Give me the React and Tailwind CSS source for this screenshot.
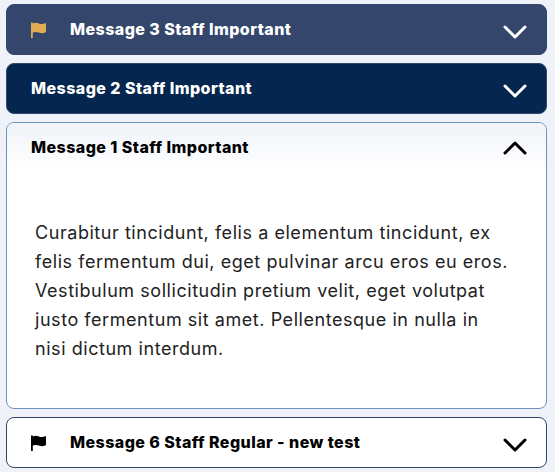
const Flag = ({ className }) => (
  <svg viewBox="0 0 15 16" className={`mr-6 h-4 w-[15px] ${className}`} fill="currentColor">
    <path d="M0 0.5 H1.8 V1.5 C4.5 0.2 6.5 1.2 8.5 1.8 C10.5 2.3 12.5 2.2 15 1 V10 C12.5 11.5 10.5 11.3 8.5 10.7 C6.5 10.1 4.5 9.3 1.8 10.5 V16 H0 Z" />
  </svg>
);

const Chevron = ({ up }) => (
  <svg viewBox="0 0 24 14" className={`h-[14px] w-6 ${up ? "" : "mt-[5px]"}`} fill="none" stroke="currentColor" strokeWidth="3" strokeLinecap="round" strokeLinejoin="round">
    <path d={up ? "M2 12 L12 2 L22 12" : "M2 2 L12 12 L22 2"} />
  </svg>
);

const Header = ({ title, flag, up, className, iconColor }) => (
  <div className={`flex h-[49px] items-center pl-6 pr-[19px] ${className}`}>
    {flag && <Flag className={iconColor} />}
    <span className="flex-1 pb-0.5 text-[16px] font-extrabold tracking-[0.44px]">{title}</span>
    <Chevron up={up} />
  </div>
);

export default function App() {
  return (
    <div className="flex h-[472px] w-[555px] flex-col gap-2 overflow-hidden bg-[#eff3f9] pl-1.5 pr-2 pt-1 font-['Inter',sans-serif]">
      <div className="overflow-hidden rounded-lg border border-[#34466c] bg-[#34466c] text-white">
        <Header title="Message 3 Staff Important" flag iconColor="text-[#e0ac52]" />
      </div>
      <div className="overflow-hidden rounded-lg border border-[#34466c] bg-[#05264e] text-white">
        <Header title="Message 2 Staff Important" />
      </div>
      <div className="overflow-hidden rounded-lg border border-[#6a93bf] bg-white text-black">
        <Header title="Message 1 Staff Important" up className="bg-gradient-to-b from-[#f0f3f9] to-white" />
        <p className="pl-7 pr-8 pt-[46px] pb-[45px] text-[18px] leading-[29px] tracking-[0.55px] text-[#222]">
          Curabitur tincidunt, felis a elementum tincidunt, ex felis fermentum dui, eget pulvinar arcu eros eu eros. Vestibulum sollicitudin pretium velit, eget volutpat justo fermentum sit amet. Pellentesque in nulla in nisi dictum interdum.
        </p>
      </div>
      <div className="overflow-hidden rounded-lg border border-[#34466c] bg-white text-black">
        <Header title="Message 6 Staff Regular - new test" flag iconColor="text-black" />
      </div>
    </div>
  );
}
